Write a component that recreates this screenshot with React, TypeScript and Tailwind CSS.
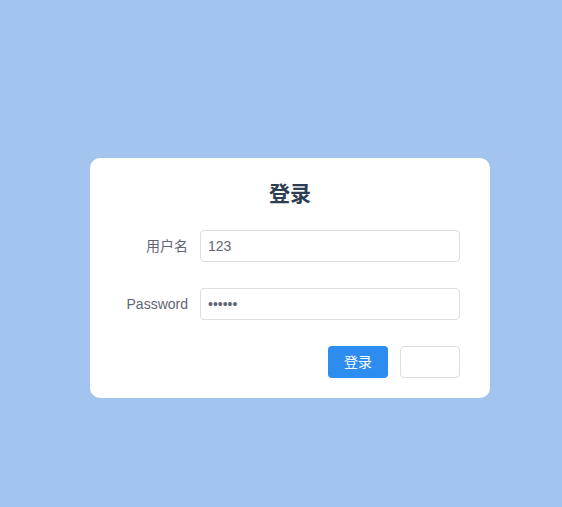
import React, { useState } from 'react';

const App = () => {
    const [username, setUsername] = useState('123');
    const [password, setPassword] = useState('123456');

    return (
        <div
            className="min-h-screen w-full bg-[#a2c4ef] flex items-center justify-center"
            style={{ fontFamily: '"Liberation Sans", "Noto Sans CJK SC", sans-serif' }}
        >
            <div className="w-[400px] bg-white rounded-[10px] px-[30px] pt-[22px] pb-[20px] mt-[49px] ml-[18px]">
                <h1 className="text-center text-[21px] leading-[28px] font-bold text-[#2c3e50] mb-[22px]">登录</h1>

                {/* Username */}
                <div className="flex items-center mb-[26px]">
                    <label className="w-[80px] pr-[12px] text-right text-[14px] text-[#5f6677]">用户名</label>
                    <input
                        type="text"
                        value={username}
                        onChange={(e) => setUsername(e.target.value)}
                        className="flex-1 h-[32px] px-[7px] border border-[#dcdee2] rounded-[4px] text-[14px] text-[#5f6677] outline-none"
                    />
                </div>

                {/* Password */}
                <div className="flex items-center mb-[26px]">
                    <label className="w-[80px] pr-[12px] text-right text-[14px] text-[#5f6677]">Password</label>
                    <input
                        type="password"
                        value={password}
                        onChange={(e) => setPassword(e.target.value)}
                        className="flex-1 h-[32px] px-[7px] border border-[#dcdee2] rounded-[4px] text-[14px] text-[#5f6677] outline-none"
                    />
                </div>

                {/* Actions */}
                <div className="flex justify-end gap-[12px]">
                    <button className="w-[60px] h-[32px] bg-[#2d8cf0] text-white text-[14px] rounded-[4px]">登录</button>
                    <button className="w-[60px] h-[32px] bg-white border border-[#dcdee2] rounded-[4px]"></button>
                </div>
            </div>
        </div>
    );
};

export default App;
